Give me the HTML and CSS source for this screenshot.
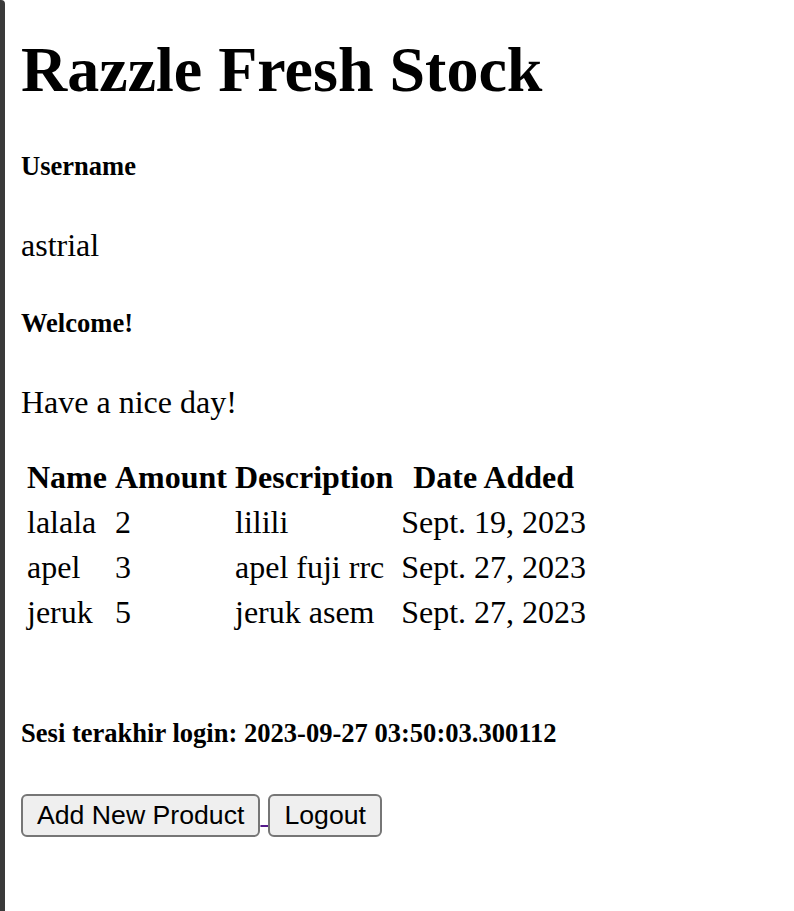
FILE: index.html
```html
<!DOCTYPE html>
<html lang="id">
<head>
<meta charset="utf-8">
<title>Razzle Fresh Stock</title>
<link rel="stylesheet" href="styles.css">
</head>
<body>
<div class="frame">
  <div class="edge"></div>
  <main class="page">
    <h1 class="title">Razzle Fresh Stock</h1>
    <h5 class="label">Username</h5>
    <p class="text">astrial</p>
    <h5 class="label">Welcome!</h5>
    <p class="text">Have a nice day!</p>
    <table class="stock">
      <thead>
        <tr><th>Name</th><th>Amount</th><th>Description</th><th>Date Added</th></tr>
      </thead>
      <tbody>
        <tr><td>lalala</td><td>2</td><td>lilili</td><td>Sept. 19, 2023</td></tr>
        <tr><td>apel</td><td>3</td><td>apel fuji rrc</td><td>Sept. 27, 2023</td></tr>
        <tr><td>jeruk</td><td>5</td><td>jeruk asem</td><td>Sept. 27, 2023</td></tr>
      </tbody>
    </table>
    <h5 class="label session">Sesi terakhir login: 2023-09-27 03:50:03.300112</h5>
    <div class="actions"><a class="link" href="#"><button class="btn" type="button">Add New Product</button> </a><a class="link" href="#"><button class="btn" type="button">Logout</button></a></div>
  </main>
</div>
</body>
</html>
```

FILE: styles.css
```css
html, body {
  margin: 0;
  padding: 0;
  background: #ffffff;
}

body {
  font-family: "Liberation Serif", "Times New Roman", serif;
  font-size: 32px;
  color: #000000;
}

.frame {
  display: flex;
  min-height: 911px;
}

.edge {
  width: 5px;
  flex: 0 0 5px;
  background: #3a3a3a;
  border-top-right-radius: 4px;
}

.page {
  flex: 1;
  padding: 0 16px;
  min-width: 0;
}

.title {
  font-size: 64px;
  font-weight: bold;
  margin: 33px 0 43px;
}

.label {
  font-size: 26.56px;
  font-weight: bold;
  margin: 44.4px 0;
}

.text {
  margin: 32px 0;
}

.stock {
  border-spacing: 4px;
  font-size: 32px;
  margin: 0;
}

.stock th,
.stock td {
  padding: 2px;
}

.stock th {
  font-weight: bold;
  text-align: center;
}

.stock td {
  text-align: left;
}

.session {
  margin-top: 81px;
  margin-bottom: 45px;
}

.actions {
  line-height: 1.15;
}

.link {
  color: #551a8b;
  text-decoration: underline;
  text-decoration-thickness: 2px;
}

.btn {
  font-family: "Liberation Sans", Arial, sans-serif;
  font-size: 26.67px;
  color: #000000;
  background: #efefef;
  border: 2px solid #767676;
  border-radius: 6px;
  padding: 4px 14px;
  margin: 0;
}
```
